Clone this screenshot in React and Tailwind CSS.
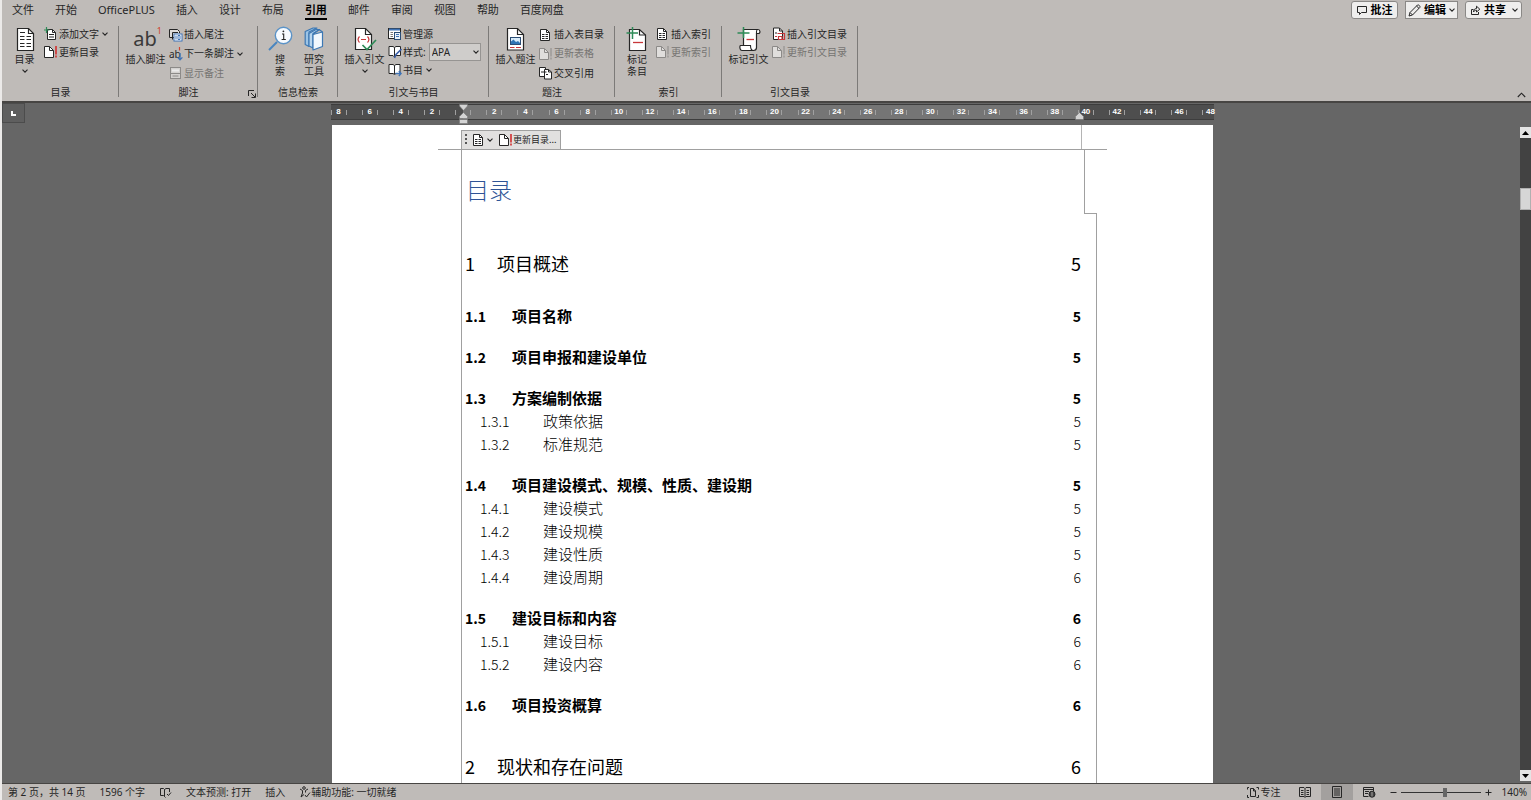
import { useState } from "react"

const INK = "#262626"
const RED = "#c8373a"
const BLUE = "#3f73b5"
const GREEN = "#2e8b57"

const tabs = [
  "文件",
  "开始",
  "OfficePLUS",
  "插入",
  "设计",
  "布局",
  "引用",
  "邮件",
  "审阅",
  "视图",
  "帮助",
  "百度网盘",
]

const toc = [
  { level: 1, num: "1", text: "项目概述", page: 5 },
  { level: 2, num: "1.1", text: "项目名称", page: 5 },
  { level: 2, num: "1.2", text: "项目申报和建设单位", page: 5 },
  { level: 2, num: "1.3", text: "方案编制依据", page: 5 },
  { level: 3, num: "1.3.1", text: "政策依据", page: 5 },
  { level: 3, num: "1.3.2", text: "标准规范", page: 5 },
  { level: 2, num: "1.4", text: "项目建设模式、规模、性质、建设期", page: 5 },
  { level: 3, num: "1.4.1", text: "建设模式", page: 5 },
  { level: 3, num: "1.4.2", text: "建设规模", page: 5 },
  { level: 3, num: "1.4.3", text: "建设性质", page: 5 },
  { level: 3, num: "1.4.4", text: "建设周期", page: 6 },
  { level: 2, num: "1.5", text: "建设目标和内容", page: 6 },
  { level: 3, num: "1.5.1", text: "建设目标", page: 6 },
  { level: 3, num: "1.5.2", text: "建设内容", page: 6 },
  { level: 2, num: "1.6", text: "项目投资概算", page: 6 },
  { level: 1, num: "2", text: "现状和存在问题", page: 6 },
]

// Marcas de la regla: de 8 a la izquierda del margen hasta 48
const rulerMarks = Array.from({ length: 29 }, (_, i) => (i - 4) * 2)

/* ---------- Iconos ---------- */

function Chevron({ up = false }) {
  return (
    <svg width="6" height="4" viewBox="0 0 6 4" fill="none" stroke={INK} strokeWidth="1.1" className="shrink-0">
      <path d={up ? "M0.5 3.4L3 0.9L5.5 3.4" : "M0.5 0.7L3 3.2L5.5 0.7"} />
    </svg>
  )
}

function TocIcon() {
  return (
    <svg width="20" height="26" viewBox="0 0 20 26" fill="none" stroke={INK}>
      <path d="M2.5 2.5H13.5L18.5 7.5V24.5H2.5Z" fill="#fff" strokeWidth="1.2" />
      <path d="M13.5 2.5V7.5H18.5" strokeWidth="1.2" />
      <path d="M5 6.5H10M5 10.5H9.5M11.5 10.5H16M5 13.5H9.5M11.5 13.5H16M5 17.5H9.5M11.5 17.5H16M5 20.5H9.5M11.5 20.5H16" />
    </svg>
  )
}

function FootnoteIcon() {
  return (
    <span className="flex items-start pl-1">
      <span className="text-xl leading-7 text-[#3a3a3a]">ab</span>
      <span className="text-[9px] leading-3 text-[#d2452f]">1</span>
    </span>
  )
}

function SearchIcon() {
  return (
    <svg width="25" height="26" viewBox="0 0 25 26" fill="none">
      <path d="M9 16L1 24" stroke="#4a86c0" strokeWidth="2" />
      <circle cx="15.5" cy="9.5" r="8.2" fill="#f7fbff" stroke="#5b93c7" strokeWidth="1.4" />
      <path d="M14 8H15.7V13.5M13.6 13.5H17.8" stroke={INK} strokeWidth="1.1" />
      <circle cx="15.4" cy="5.3" r="0.9" fill={INK} />
    </svg>
  )
}

function ResearchIcon() {
  return (
    <svg width="20" height="26" viewBox="0 0 20 26" fill="none" stroke="#3c78b4" strokeWidth="1.2" strokeLinejoin="round">
      <path d="M1.2 5.5L9 2H13L5 6V20.5L1.2 18.5Z" fill="#9cc4e6" />
      <path d="M5 7.5L12 3.5H15.5L9 7.5V22L5 20Z" fill="#b7d5ee" />
      <path d="M9 8.5L18.5 6V20.5L9 24Z" fill="#f1f8fe" />
      <path d="M9 8.5L15 3.6L18.5 6" />
    </svg>
  )
}

function CitationIcon() {
  return (
    <svg width="24" height="26" viewBox="0 0 24 26" fill="none">
      <path d="M2.5 2.5H12.5L18.5 8.5V23.5H2.5Z" fill="#fff" stroke={INK} strokeWidth="1.2" />
      <path d="M12.5 2.5V8.5H18.5" stroke={INK} strokeWidth="1.2" />
      <path d="M6.5 10.5C4.8 12.3 4.8 14.7 6.5 16.5M14.5 10.5C16.2 12.3 16.2 14.7 14.5 16.5M8 13.5H13" stroke={RED} strokeWidth="1.2" />
      <path d="M9.5 19L14 23.5L23 14" stroke={GREEN} strokeWidth="1.7" />
    </svg>
  )
}

function CaptionIcon() {
  return (
    <svg width="20" height="26" viewBox="0 0 20 26" fill="none">
      <path d="M1.5 2.5H11.5L17.5 8.5V24H1.5Z" fill="#fff" stroke={INK} strokeWidth="1.2" />
      <path d="M11.5 2.5V8.5H17.5" stroke={INK} strokeWidth="1.2" />
      <rect x="4.5" y="11.5" width="10" height="7" fill="#d9ecfa" stroke="#2b4d75" />
      <path d="M5 18V15.5L7.5 13.5L10 16L12 15L14 17V18Z" fill="#2f74b5" />
      <path d="M4 21.5H8.5M10 21.5H15" stroke={RED} strokeWidth="1.2" />
    </svg>
  )
}

function MarkEntryIcon() {
  return (
    <svg width="22" height="26" viewBox="0 0 22 26" fill="none">
      <path d="M3.5 3.5H13.5L19.5 9V24.5H3.5Z" fill="#fff" stroke={INK} strokeWidth="1.2" />
      <path d="M13.5 3.5V9H19.5" stroke={INK} strokeWidth="1.2" />
      <path d="M7 16.5H17" stroke={RED} strokeWidth="1.3" />
      <path d="M6.5 1V13M0.5 7H12" stroke={GREEN} strokeWidth="1.5" />
    </svg>
  )
}

function MarkCitationIcon() {
  return (
    <svg width="24" height="26" viewBox="0 0 24 26" fill="none">
      <path
        d="M6.5 3.5H21C23.5 3.5 23.5 7.5 21.5 7.5H19.5V21.5C19.5 23.5 18 24.5 16.5 24.5H5C2.5 24.5 2.5 19.5 3.5 19.5H6.5Z"
        fill="#fff"
        stroke={INK}
        strokeWidth="1.2"
      />
      <path d="M19.5 7.5V5.5C19.5 4.3 20 3.5 21 3.5M6.5 19.5H13.5C13.5 22 14 24.5 16.5 24.5" stroke={INK} strokeWidth="1.1" />
      <path d="M9.5 13.5H17" stroke={RED} strokeWidth="1.3" />
      <path d="M6.5 1V12M0.5 7H12.5" stroke={GREEN} strokeWidth="1.5" />
    </svg>
  )
}

function SmallIcon({ children, dim = false }) {
  return (
    <svg
      width="14"
      height="14"
      viewBox="0 0 14 14"
      fill="none"
      stroke={dim ? "#8c8a88" : INK}
      className="shrink-0"
    >
      {children}
    </svg>
  )
}

function AddTextIcon() {
  return (
    <SmallIcon>
      <path d="M3.5 2.5H8.5L11.5 5.5V12.5H3.5Z" fill="#fff" />
      <path d="M8.5 2.5V5.5H11.5M5 7.5H10M5 10H10" />
      <path d="M2.5 0V6M0 3H5.5" stroke={GREEN} strokeWidth="1.2" />
    </SmallIcon>
  )
}

function UpdateIcon({ dim = false }) {
  return (
    <SmallIcon dim={dim}>
      <path d="M0.5 1.5H5.5L9.5 5.5V12.5H0.5Z" fill={dim ? "#e0dedc" : "#fff"} />
      <path d="M5.5 1.5V5.5H9.5" />
      <path d="M12 1V9.5M12 10.5V12.5" stroke={dim ? "#8c8a88" : "#d22f2f"} strokeWidth={dim ? "1" : "1.6"} />
    </SmallIcon>
  )
}

function EndnoteIcon() {
  return (
    <SmallIcon>
      <path d="M5 9.5H0.5V1.5H8.5L10.5 3.5V5" fill="#dedcda" />
      <path d="M3.5 11.5V4.5H9" />
      <rect x="5" y="6" width="8" height="7" fill="#fff" stroke={BLUE} />
      <path d="M7 7.5V11.5M9 7.5H11V11.5H9Z" stroke={BLUE} />
    </SmallIcon>
  )
}

function NextFootnoteIcon() {
  return (
    <span className="relative w-3.5 shrink-0 text-left text-[10px] leading-[14px]">
      ab
      <svg width="6" height="14" viewBox="0 0 6 14" fill="none" className="absolute top-0 right-0">
        <path d="M2.5 0V3.5" stroke="#d2452f" strokeWidth="1.2" />
        <path d="M3 6V13M0.6 10.4L3 12.8L5.4 10.4" stroke={BLUE} strokeWidth="1.3" />
      </svg>
    </span>
  )
}

function ShowNotesIcon() {
  return (
    <SmallIcon dim>
      <rect x="1.5" y="1.5" width="10" height="11" fill="#d3d1cf" />
      <path d="M1.5 7.5H11.5M3.5 10H9.5" />
      <path d="M3 3.5H10V5.5H3Z" fill="#ebebeb" stroke="none" />
    </SmallIcon>
  )
}

function ManageIcon() {
  return (
    <SmallIcon>
      <rect x="0.5" y="1.5" width="12" height="10" fill="#fff" />
      <path d="M1 2.5H12" stroke={BLUE} strokeWidth="2" />
      <path d="M2.5 5.5H5M2.5 7.5H5M2.5 9.5H5" stroke="#777" />
      <rect x="6.5" y="5.5" width="6" height="7" fill="#e8f1fa" stroke="#2b4d75" />
      <path d="M8 7.5H11M8 9.5H11" stroke={BLUE} />
    </SmallIcon>
  )
}

function StyleIcon() {
  return (
    <SmallIcon>
      <path d="M1 1.5H5L6.5 2.5L8 1.5H12.5V10.5H8L6.5 12L5 10.5H1Z" fill="#fff" />
      <path d="M6.5 2.5V11.5" />
      <path d="M13.5 4L8 9.5L6.5 13" stroke="#3b5fa8" strokeWidth="1.6" />
    </SmallIcon>
  )
}

function BookIcon() {
  return (
    <SmallIcon>
      <path d="M1 1.5H5L6.5 2.5L8 1.5H12V10.5H8L6.5 11.5L5 10.5H1Z" fill="#fff" />
      <path d="M6.5 2.5V11" />
      <path d="M7.5 10.5H13M10.8 8L13.2 10.5L10.8 13" stroke={BLUE} strokeWidth="1.3" />
    </SmallIcon>
  )
}

function ListDocIcon() {
  return (
    <SmallIcon>
      <path d="M1.5 1.5H7.5L10.5 4.5V12.5H1.5Z" fill="#fff" />
      <path d="M7.5 1.5V4.5H10.5M3 6.5H5.5M6.5 6.5H9M3 8.5H5.5M6.5 8.5H9M3 10.5H5.5M6.5 10.5H9" />
    </SmallIcon>
  )
}

function CrossRefIcon() {
  return (
    <SmallIcon>
      <path d="M0.5 1.5H6.5V10.5H0.5Z" fill="#fff" />
      <path d="M5.5 3.5H9.5L12.5 6V13H5.5Z" fill="#fff" />
      <path d="M9.5 3.5V6H12.5M2 6H7.5M7 8.5H9" />
    </SmallIcon>
  )
}

function CitationTableIcon() {
  return (
    <SmallIcon>
      <path d="M1.5 1H7.5L10.5 4V12.5H1.5Z" fill="#fff" />
      <path d="M7.5 1V4H10.5M3 6H5" />
      <path d="M3 9.5H5M5.5 6.5H12.5V12.5H6.5V9.5H10V12.5" stroke={RED} strokeWidth="1.2" />
    </SmallIcon>
  )
}

/* ---------- Cinta ---------- */

function BigButton({ icon, lines, menu = false, width = "w-[47px]" }) {
  return (
    <button type="button" className={`flex shrink-0 flex-col items-center ${width}`}>
      <span className="flex h-7 items-center justify-center">{icon}</span>
      {lines.map((line) => (
        <span key={line} className="h-3 whitespace-nowrap leading-3">
          {line}
        </span>
      ))}
      {menu && (
        <span className="flex h-3 items-center">
          <Chevron />
        </span>
      )}
    </button>
  )
}

function SmallButton({ icon, label, menu = false, disabled = false }) {
  return (
    <button
      type="button"
      disabled={disabled}
      className="flex flex-1 items-center gap-px whitespace-nowrap disabled:text-[#767472]"
    >
      {icon}
      <span>{label}</span>
      {menu && (
        <span className="ml-0.5">
          <Chevron />
        </span>
      )}
    </button>
  )
}

function Group({ title, width, launcher = false, children }) {
  return (
    <section className={`relative flex shrink-0 flex-col pt-[3px] pb-[3px] ${width}`} aria-label={title}>
      <div className="flex flex-1 items-start pl-[3px]">{children}</div>
      <h2 className="text-center leading-3">{title}</h2>
      {launcher && (
        <button type="button" aria-label={title} className="absolute right-[2px] bottom-[3px]">
          <svg width="8" height="8" viewBox="0 0 8 8" fill="none" stroke={INK}>
            <path d="M0.5 6V0.5H6M3 3L7 7M7.5 3.5V7.5H3.5" />
          </svg>
        </button>
      )}
      <span className="absolute top-1 right-0 bottom-1 w-px bg-[#7c7a78]" />
    </section>
  )
}

function Ribbon() {
  const [style, setStyle] = useState("APA")

  return (
    <div className="relative flex h-[79px] text-[10px] text-[#262626]">
      <Group title="目录" width="w-[117px]">
        <BigButton icon={<TocIcon />} lines={["目录"]} menu width="w-[39px]" />
        <div className="flex h-9 flex-col">
          <SmallButton icon={<AddTextIcon />} label="添加文字" menu />
          <SmallButton icon={<UpdateIcon />} label="更新目录" />
        </div>
      </Group>

      <Group title="脚注" width="w-[139px]" launcher>
        <BigButton icon={<FootnoteIcon />} lines={["插入脚注"]} />
        <div className="flex h-[58px] flex-col">
          <SmallButton icon={<EndnoteIcon />} label="插入尾注" />
          <SmallButton icon={<NextFootnoteIcon />} label="下一条脚注" menu />
          <SmallButton icon={<ShowNotesIcon />} label="显示备注" disabled />
        </div>
      </Group>

      <Group title="信息检索" width="w-[80px]">
        <BigButton icon={<SearchIcon />} lines={["搜", "索"]} width="w-[38px]" />
        <BigButton icon={<ResearchIcon />} lines={["研究", "工具"]} width="w-[30px]" />
      </Group>

      <Group title="引文与书目" width="w-[151px]">
        <BigButton icon={<CitationIcon />} lines={["插入引文"]} menu />
        <div className="flex h-[54px] flex-col">
          <SmallButton icon={<ManageIcon />} label="管理源" />
          <div className="flex flex-1 items-center gap-px whitespace-nowrap">
            <StyleIcon />
            <label htmlFor="citation-style">样式:</label>
            <span className="relative ml-0.5 flex">
              <select
                id="citation-style"
                value={style}
                onChange={(e) => setStyle(e.target.value)}
                className="h-[18px] w-[52px] appearance-none border border-[#969492] bg-[#cfcdcb] pl-0.5 text-[10px] leading-4"
              >
                <option>APA</option>
                <option>MLA</option>
              </select>
              <span className="pointer-events-none absolute top-[7px] right-[2px]">
                <Chevron />
              </span>
            </span>
          </div>
          <SmallButton icon={<BookIcon />} label="书目" menu />
        </div>
      </Group>

      <Group title="题注" width="w-[126px]">
        <BigButton icon={<CaptionIcon />} lines={["插入题注"]} />
        <div className="flex h-[58px] flex-col">
          <SmallButton icon={<ListDocIcon />} label="插入表目录" />
          <SmallButton icon={<UpdateIcon dim />} label="更新表格" disabled />
          <SmallButton icon={<CrossRefIcon />} label="交叉引用" />
        </div>
      </Group>

      <Group title="索引" width="w-[107px]">
        <BigButton icon={<MarkEntryIcon />} lines={["标记", "条目"]} width="w-[38px]" />
        <div className="flex h-9 flex-col">
          <SmallButton icon={<ListDocIcon />} label="插入索引" />
          <SmallButton icon={<UpdateIcon dim />} label="更新索引" disabled />
        </div>
      </Group>

      <Group title="引文目录" width="w-[136px]">
        <BigButton icon={<MarkCitationIcon />} lines={["标记引文"]} />
        <div className="flex h-9 flex-col">
          <SmallButton icon={<CitationTableIcon />} label="插入引文目录" />
          <SmallButton icon={<UpdateIcon dim />} label="更新引文目录" disabled />
        </div>
      </Group>

      <button type="button" aria-label="折叠功能区" className="mt-auto mr-[5px] mb-[3px] ml-auto">
        <svg width="9" height="6" viewBox="0 0 9 6" fill="none" stroke={INK} strokeWidth="1.1">
          <path d="M0.8 5L4.5 1.2L8.2 5" />
        </svg>
      </button>
    </div>
  )
}

function TopBar() {
  const [active, setActive] = useState("引用")

  return (
    <div className="flex h-[22px] items-start justify-between text-[11px] text-[#262626]">
      <nav className="flex gap-[21px] pl-2.5">
        {tabs.map((tab) => (
          <button
            key={tab}
            type="button"
            onClick={() => setActive(tab)}
            className={
              active === tab
                ? "h-5 border-b-2 border-black leading-[20px] font-bold text-black"
                : "h-5 border-b-2 border-transparent leading-[20px]"
            }
          >
            {tab}
          </button>
        ))}
      </nav>
      <div className="flex gap-[7px] pt-px pr-[9px] font-bold text-black">
        <button
          type="button"
          className="flex h-[18px] w-[47px] items-center justify-center gap-1 rounded-[3px] border border-[#8a8886] bg-[#efeeed]"
        >
          <svg width="10" height="9" viewBox="0 0 10 9" fill="none" stroke={INK}>
            <path d="M0.5 0.5H9.5V6.5H4.5L2.5 8.5V6.5H0.5Z" />
          </svg>
          批注
        </button>
        <button
          type="button"
          className="flex h-[18px] w-[53px] items-center justify-center gap-[3px] border border-[#8a8886] bg-[#efeeed]"
        >
          <svg width="13" height="13" viewBox="0 0 13 13" fill="none" stroke={INK}>
            <path d="M1 12L2 8.5L9.5 1C10.5 0.3 12.7 2.3 11.8 3.5L4.5 11ZM2 8.5L4.5 11M8.5 2L11 4.4" />
          </svg>
          编辑
          <Chevron />
        </button>
        <button
          type="button"
          className="flex h-[18px] w-[57px] items-center justify-between rounded-[3px] border border-[#8a8886] bg-[#efeeed] pr-[3px] pl-1"
        >
          <span className="flex items-center gap-[3px]">
            <svg width="11" height="10" viewBox="0 0 11 10" fill="none" stroke={INK}>
              <path d="M3.5 4.5H1.5V9.5H8.5V7M3.5 7C3.5 4.5 5 3.5 6.5 3.5V1.2L9.8 4.2L6.5 7V5.2C5 5.2 4 6 3.5 7Z" />
            </svg>
            共享
          </span>
          <Chevron />
        </button>
      </div>
    </div>
  )
}

/* ---------- Documento ---------- */

function Ruler() {
  return (
    <div className="relative grid h-4 w-[883px] shrink-0 border-y border-[#3d3d3d] bg-[#757575]">
      <div className="col-start-1 row-start-1 flex justify-between">
        <span className="w-[132px] bg-[#4e4e4e]" />
        <span className="w-[134px] bg-[#4e4e4e]" />
      </div>
      <div className="col-start-1 row-start-1 min-w-0">
        <div className="-ml-2 grid h-full w-[903px] grid-cols-29 items-center font-['Liberation_Sans',sans-serif]">
          {rulerMarks.map((mark) => (
            <span
              key={mark}
              className="mx-auto flex h-[5px] w-4 items-center justify-center border-x border-[#a0a0a0] text-[8px] leading-none font-bold text-white last:border-r-transparent"
            >
              {mark === 0 ? "" : Math.abs(mark)}
            </span>
          ))}
        </div>
      </div>
      <svg width="9" height="20" viewBox="0 0 9 20" className="absolute -top-px left-[128px]">
        <path d="M0.5 0.5H8.5V2L4.5 6.5L0.5 2Z" fill="#d4d4d4" stroke="#777" strokeWidth="0.6" />
        <path d="M4.5 8.5L8.5 12.5V14.5H0.5V12.5Z" fill="#d4d4d4" stroke="#777" strokeWidth="0.6" />
        <rect x="0.5" y="15.5" width="8" height="4" fill="#d4d4d4" stroke="#777" strokeWidth="0.6" />
      </svg>
      <svg width="9" height="8" viewBox="0 0 9 8" className="absolute top-[7px] right-[130px]">
        <path d="M4.5 0.5L8.5 4.5V7.5H0.5V4.5Z" fill="#d4d4d4" stroke="#777" strokeWidth="0.6" />
      </svg>
    </div>
  )
}

function TocRow({ row }) {
  if (row.level === 1) {
    return (
      <li className="mb-[25px] flex items-baseline text-lg leading-8 not-first:mt-[34px]">
        <span className="w-8">{row.num}</span>
        <a href="#toc" className="flex-1">{row.text}</a>
        <span>{row.page}</span>
      </li>
    )
  }
  if (row.level === 2) {
    return (
      <li className="mt-[18px] flex h-[23px] items-baseline text-[15px] leading-[23px] font-bold">
        <span className="w-[47px] text-[14px] leading-[23px]">{row.num}</span>
        <a href="#toc" className="flex-1">{row.text}</a>
        <span className="text-[14px] leading-[23px]">{row.page}</span>
      </li>
    )
  }
  return (
    <li className="flex h-[23px] items-baseline pl-[15px] text-[15px] leading-[23px] font-light">
      <span className="w-[63px] text-[14px] leading-[23px]">{row.num}</span>
      <a href="#toc" className="flex-1">{row.text}</a>
      <span className="text-[14px] leading-[23px]">{row.page}</span>
    </li>
  )
}

function Page() {
  return (
    <main className="mt-[5px] flex min-h-0 w-[881px] flex-1 flex-col overflow-hidden bg-white font-['Noto_Sans_CJK_SC',sans-serif]">
      <div className="mx-[106px] flex h-[25px] shrink-0 items-end justify-between border-b border-[#a0a0a0] pr-[25px] pl-[23px]">
        <div className="flex h-[19px] w-[100px] items-center border border-b-0 border-[#a0a0a0] bg-[#e1e0df] pl-[3px] text-[9px] text-[#262626]">
          <svg width="3" height="12" viewBox="0 0 3 12" fill="#555" className="mr-1 shrink-0">
            <path d="M0 0H2V2H0ZM0 4H2V6H0ZM0 8H2V10H0Z" />
          </svg>
          <button type="button" aria-label="目录" className="mr-1.5 flex items-center gap-px">
            <ListDocIcon />
            <Chevron />
          </button>
          <button type="button" className="flex items-center whitespace-nowrap">
            <UpdateIcon />
            更新目录...
          </button>
        </div>
        <span className="h-full w-px bg-[#b4b4b4]" />
      </div>

      <div className="mr-[116px] ml-[129px] flex min-h-0 flex-1 flex-col border-l border-[#a0a0a0]">
        <h1 className="mr-3 h-[63px] shrink-0 border-r border-[#a0a0a0] pt-[18px] pl-1 text-[23px] leading-[42px] font-light text-[#2f5496]">
          目录
        </h1>
        <div className="flex shrink-0 justify-end">
          <span className="h-px w-[13px] bg-[#a0a0a0]" />
        </div>
        <ol id="toc" className="flex-1 border-r border-[#a0a0a0] pt-[33px] pr-[15px] pl-[3px] text-black">
          {toc.map((row) => (
            <TocRow key={row.num} row={row} />
          ))}
        </ol>
      </div>
    </main>
  )
}

function ScrollBar() {
  return (
    <div className="mt-6 mb-0.5 flex w-[11px] shrink-0 flex-col bg-[#424242]">
      <button type="button" aria-label="向上" className="flex h-[11px] items-center justify-center bg-[#e4e4e4]">
        <svg width="7" height="4" viewBox="0 0 7 4" fill="#000">
          <path d="M3.5 0L7 4H0Z" />
        </svg>
      </button>
      <div className="mt-[50px] h-[22px] border border-[#b0b0b0] bg-[#d6d6d6]" />
      <button type="button" aria-label="向下" className="mt-auto flex h-[11px] items-center justify-center bg-[#e4e4e4]">
        <svg width="7" height="4" viewBox="0 0 7 4" fill="#000">
          <path d="M0 0H7L3.5 4Z" />
        </svg>
      </button>
    </div>
  )
}

function Workspace() {
  return (
    <div className="flex min-h-0 flex-1 border-t-2 border-[#474543] bg-[#666]">
      <div className="w-[23px] shrink-0">
        <div className="flex h-5 items-center justify-center border border-[#4c4c4c] bg-[#5f5f5f]">
          <svg width="5" height="5" viewBox="0 0 5 5" fill="none" stroke="#fff" strokeWidth="2">
            <path d="M1 0V4H5" />
          </svg>
        </div>
      </div>
      <div className="flex min-w-0 flex-1 flex-col items-center pt-px">
        <Ruler />
        <Page />
      </div>
      <ScrollBar />
    </div>
  )
}

/* ---------- Barra de estado ---------- */

function StatusBar() {
  const [zoom, setZoom] = useState(140)

  return (
    <footer className="flex h-[17px] shrink-0 items-center justify-between border-t border-[#474543] bg-[#bfbbb8] pr-1 pl-1.5 text-[10px] whitespace-nowrap text-[#262626]">
      <div className="flex items-center gap-3.5">
        <span>第 2 页，共 14 页</span>
        <span>1596 个字</span>
        <svg width="13" height="11" viewBox="0 0 13 11" fill="none" stroke={INK}>
          <path d="M5.5 9.5L4.5 8.5H1.5V1.5H4.5L5.5 2.5V9.5L6.5 10.5M5.5 2.5L7 1.5H10.5V5M8 7L9.5 8.5L12 5.5" />
        </svg>
        <span>文本预测: 打开</span>
        <span>插入</span>
        <span className="flex items-center">
          <svg width="12" height="12" viewBox="0 0 12 12" fill="none" stroke={INK}>
            <circle cx="5" cy="2" r="1.3" />
            <path d="M1 3L3.5 4.5V7L2 11L5 8.5M9 3L6.5 4.5V6.5M6 9L7.5 11L11 6.5" />
          </svg>
          辅助功能: 一切就绪
        </span>
      </div>

      <div className="flex h-full items-center">
        <button type="button" className="mr-[18px] flex items-center gap-0.5">
          <svg width="12" height="11" viewBox="0 0 12 11" fill="none" stroke={INK}>
            <path d="M2 0.5H0.5V2.5M0.5 8V10.5H2M9.5 0.5H11.5V2.5M11.5 8V10.5H9.5M3.5 1.5H6.5L8.5 4V9.5H3.5ZM6.5 1.5V4H8.5" />
          </svg>
          专注
        </button>
        <button type="button" aria-label="阅读视图" className="mr-2.5">
          <svg width="12" height="11" viewBox="0 0 12 11" fill="none" stroke={INK}>
            <path d="M0.5 0.5H5L6 1.5L7 0.5H11.5V9.5H7L6 10.5L5 9.5H0.5ZM6 1.5V10M2 3.5H4.5M2 5.5H4.5M2 7.5H4.5M7.5 3.5H10M7.5 5.5H10M7.5 7.5H10" />
          </svg>
        </button>
        <button type="button" aria-label="页面视图" className="mr-2.5 flex h-full w-8 items-center justify-center bg-[#a3a09e]">
          <svg width="10" height="12" viewBox="0 0 10 12" fill="none" stroke={INK}>
            <path d="M0.5 0.5H9.5V11.5H0.5ZM2 3H8M2 5H8M2 7H8M2 9H8" />
          </svg>
        </button>
        <button type="button" aria-label="Web 版式" className="mr-3.5">
          <svg width="13" height="11" viewBox="0 0 13 11" fill="none" stroke={INK}>
            <path d="M5.5 9.5H0.5V0.5H10.5V4M0.5 2.5H10.5M2 4.5H6M2 6.5H5" />
            <circle cx="9" cy="7.2" r="3" fill="#444" />
            <path d="M9 5V9.5" stroke="#bfbbb8" strokeWidth="0.8" />
          </svg>
        </button>
        <button type="button" aria-label="缩小" className="mr-1">
          <svg width="7" height="7" viewBox="0 0 7 7" stroke={INK}>
            <path d="M0.5 3.5H6.5" />
          </svg>
        </button>
        <input
          type="range"
          aria-label="缩放"
          min="10"
          max="240"
          value={zoom}
          onChange={(e) => setZoom(Number(e.target.value))}
          className="h-3 w-20 appearance-none bg-transparent [&::-webkit-slider-runnable-track]:h-px [&::-webkit-slider-runnable-track]:bg-[#333] [&::-webkit-slider-thumb]:-mt-1 [&::-webkit-slider-thumb]:h-[9px] [&::-webkit-slider-thumb]:w-1 [&::-webkit-slider-thumb]:appearance-none [&::-webkit-slider-thumb]:bg-[#666]"
        />
        <button type="button" aria-label="放大" className="mr-2.5 ml-1">
          <svg width="7" height="7" viewBox="0 0 7 7" stroke={INK}>
            <path d="M0.5 3.5H6.5M3.5 0.5V6.5" />
          </svg>
        </button>
        <span>{zoom}%</span>
      </div>
    </footer>
  )
}

function App() {
  return (
    <div className="flex h-screen flex-col overflow-hidden border-l-2 border-[#eceae9] bg-[#666] font-['Noto_Sans','Noto_Sans_CJK_SC',sans-serif]">
      <header className="shrink-0 bg-[#bfbbb8]">
        <TopBar />
        <Ribbon />
      </header>
      <Workspace />
      <StatusBar />
    </div>
  )
}

export default App
